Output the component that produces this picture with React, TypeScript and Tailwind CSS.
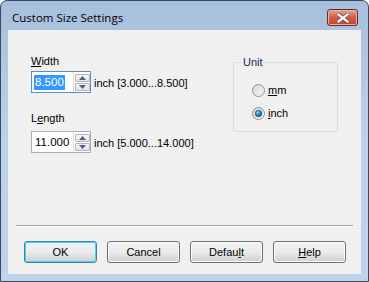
import React from "react";

const FONT = { fontFamily: '"Liberation Sans", Arial, sans-serif' };

function SpinBtn({ up }: { up?: boolean }) {
  return (
    <div className="flex h-[8px] w-[15px] items-center justify-center rounded-[1px] border border-[#b5b5b5] bg-gradient-to-b from-[#f7f7f7] to-[#e3e3e3]">
      <svg width="7" height="4" viewBox="0 0 7 4">
        {up ? <path d="M0 4 L3.5 0 L7 4 Z" fill="#4d6185" /> : <path d="M0 0 L3.5 4 L7 0 Z" fill="#4d6185" />}
      </svg>
    </div>
  );
}

function Spin({ value, focused }: { value: string; focused?: boolean }) {
  return (
    <div className={`flex h-[22px] w-[60px] border bg-white ${focused ? "border-[#5f8fbf]" : "border-[#abadb3]"}`}>
      <div className="flex flex-1 items-center pl-[2px] text-[11.5px] leading-[15px]">
        {focused ? <span className="bg-[#3399ff] px-[1px] text-white">{value}</span> : <span className="px-[1px]">{value}</span>}
      </div>
      <div className="flex w-[17px] flex-col justify-center gap-[1px] border-l border-[#dcdcdc] pl-[1px]">
        <SpinBtn up />
        <SpinBtn />
      </div>
    </div>
  );
}

function Radio({ checked, children }: { checked?: boolean; children: React.ReactNode }) {
  return (
    <div className="flex h-[13px] items-center gap-[3px] leading-[13px]">
      <svg width="13" height="13" viewBox="0 0 13 13">
        <defs>
          <linearGradient id="rb" x1="0" y1="0" x2="1" y2="1">
            <stop offset="0" stopColor="#cfcfcf" />
            <stop offset="1" stopColor="#ffffff" />
          </linearGradient>
          <radialGradient id="rd" cx="0.4" cy="0.35" r="0.7">
            <stop offset="0" stopColor="#9ed9f7" />
            <stop offset="0.45" stopColor="#2a8fcf" />
            <stop offset="1" stopColor="#0f4a78" />
          </radialGradient>
        </defs>
        <circle cx="6.5" cy="6.5" r="6" fill="url(#rb)" stroke="#8f8f8f" />
        <circle cx="6.5" cy="6.5" r="4.3" fill="none" stroke="#e6e6e6" />
        {checked && <circle cx="6.5" cy="6.5" r="3.3" fill="url(#rd)" stroke="#1b4d76" strokeWidth="0.6" />}
      </svg>
      <span>{children}</span>
    </div>
  );
}

function Btn({ children, primary }: { children: React.ReactNode; primary?: boolean }) {
  return (
    <div
      className={`flex h-[22px] w-[73px] items-center justify-center rounded-[3px] border bg-gradient-to-b from-[#f2f2f2] via-[#ebebeb] to-[#cfcfcf] ${
        primary ? "border-[#3c7fb1] shadow-[inset_0_0_0_1px_#48d4f5]" : "border-[#707070] shadow-[inset_0_0_0_1px_#fcfcfc]"
      }`}
    >
      {children}
    </div>
  );
}

export default function App() {
  return (
    <div style={FONT} className="h-[282px] w-[369px] bg-white text-[11px] text-black">
      <div className="flex h-full w-full flex-col rounded-t-[7px] border border-[#3a4a5c] bg-gradient-to-b from-[#a6bfdc] via-[#bcd2ea] to-[#bfd4ec]">
        {/* title bar */}
        <div className="flex h-[29px] items-start justify-between pl-[11px] pr-[10px]">
          <span className="pt-[9px] text-[11.5px] leading-[16px]" style={{ fontFamily: '"Open Sans", "Noto Sans", sans-serif' }}>
            Custom Size Settings
          </span>
          <div className="mt-[8px] flex h-[17px] w-[31px] items-center justify-center rounded-[3px] border border-[#6e2b22] bg-gradient-to-b from-[#e8a493] via-[#cf5c4a] to-[#c3432f] shadow-[inset_0_0_0_1px_#eab0a3]">
            <svg width="12" height="10" viewBox="0 0 12 10">
              <path d="M1 1 L11 9 M11 1 L1 9" stroke="#5c5c5c" strokeWidth="3.6" strokeLinecap="square" />
              <path d="M1.5 1.5 L10.5 8.5 M10.5 1.5 L1.5 8.5" stroke="#ffffff" strokeWidth="2.2" strokeLinecap="square" />
            </svg>
          </div>
        </div>
        {/* client area */}
        <div className="mx-[7px] flex h-[244px] flex-col bg-[#f0f0f0]">
          <div className="flex h-[195px]">
            <div className="flex w-[225px] flex-col pl-[23px] pt-[25px]">
              <span className="leading-[13px]">
                <span className="underline underline-offset-[1px]">W</span>idth
              </span>
              <div className="mt-[3px] flex items-center gap-[3px]">
                <Spin value="8.500" focused />
                <span className="pt-[2px]">inch [3.000...8.500]</span>
              </div>
              <span className="mt-[19px] leading-[13px]">
                L<span className="underline underline-offset-[1px]">e</span>ngth
              </span>
              <div className="mt-[6px] flex items-center gap-[3px]">
                <Spin value="11.000" />
                <span className="pt-[2px]">inch [5.000...14.000]</span>
              </div>
            </div>
            <fieldset className="mt-[24px] h-[78px] w-[105px] rounded-[3px] border border-[#d5dfe5] pl-[18px]">
              <legend className="ml-[-10px] px-[1px] text-[#151c55]">Unit</legend>
              <div className="flex flex-col gap-[10px] pt-[13px]">
                <Radio>
                  <span className="underline underline-offset-[1px]">m</span>m
                </Radio>
                <Radio checked>
                  <span className="underline underline-offset-[1px]">i</span>nch
                </Radio>
              </div>
            </fieldset>
          </div>
          <div className="mx-[8px] border-t border-b border-t-[#a0a0a0] border-b-white" />
          <div className="mt-[14px] flex gap-[10px] pl-[16px]">
            <Btn primary>OK</Btn>
            <Btn>Cancel</Btn>
            <Btn>
              Defau<span className="underline underline-offset-[1px]">l</span>t
            </Btn>
            <Btn>
              <span className="underline underline-offset-[1px]">H</span>elp
            </Btn>
          </div>
        </div>
      </div>
    </div>
  );
}
